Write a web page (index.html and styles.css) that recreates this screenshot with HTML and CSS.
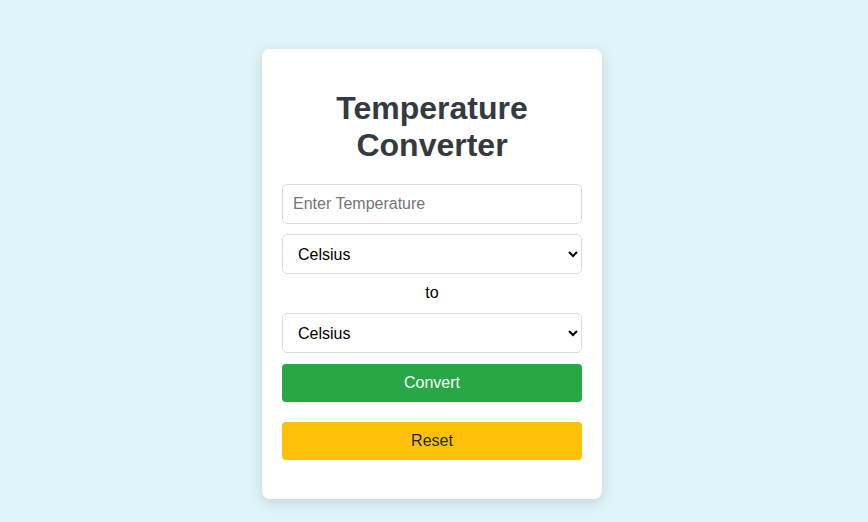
FILE: index.html
```html
<!DOCTYPE html>
<html lang="en">
<head>
<meta charset="utf-8">
<title>Temperature Converter</title>
<link rel="stylesheet" href="styles.css">
</head>
<body>
<div class="card">
  <h1 class="title">Temperature Converter</h1>
  <input class="field" type="text" placeholder="Enter Temperature">
  <select class="field select">
    <option>Celsius</option>
    <option>Fahrenheit</option>
    <option>Kelvin</option>
  </select>
  <p class="to">to</p>
  <select class="field select">
    <option>Celsius</option>
    <option>Fahrenheit</option>
    <option>Kelvin</option>
  </select>
  <button class="btn convert">Convert</button>
  <button class="btn reset">Reset</button>
  <div class="result"></div>
</div>
</body>
</html>
```

FILE: styles.css
```css
html, body {
  margin: 0;
  padding: 0;
}
body {
  background: #e0f5f8;
  font-family: Arial, "Liberation Sans", sans-serif;
  min-height: 522px;
  padding-right: 4px;
  display: flex;
  justify-content: center;
  align-items: flex-start;
}
.card {
  margin-top: 49px;
  width: 300px;
  padding: 20px;
  background: #fff;
  border-radius: 8px;
  box-shadow: 0 4px 14px rgba(0, 0, 0, 0.13);
  display: flex;
  flex-direction: column;
  text-align: center;
}
.title {
  font-size: 32px;
  font-weight: bold;
  color: #343a40;
  margin: 21px 0 20px;
  line-height: 37px;
}
.field {
  box-sizing: border-box;
  width: 100%;
  height: 40px;
  margin: 0 0 10px;
  padding: 10px;
  font-size: 16px;
  font-family: Arial, "Liberation Sans", sans-serif;
  border: 1px solid #ddd;
  border-radius: 5px;
  background: #fff;
  color: #000;
}
.field::placeholder {
  color: #757575;
}
.select {
  padding: 0 6px 0 11px;
}
.to {
  margin: 0 0 11px;
  font-size: 16px;
  line-height: 18px;
  color: #000;
}
.btn {
  height: 38px;
  width: 100%;
  border: none;
  border-radius: 4px;
  font-size: 16px;
  font-family: Arial, "Liberation Sans", sans-serif;
  cursor: pointer;
}
.convert {
  background: #28a745;
  color: #fff;
  margin-top: 1px;
  margin-bottom: 20px;
}
.reset {
  background: #ffc107;
  color: #212529;
}
.result {
  height: 19px;
}
```
